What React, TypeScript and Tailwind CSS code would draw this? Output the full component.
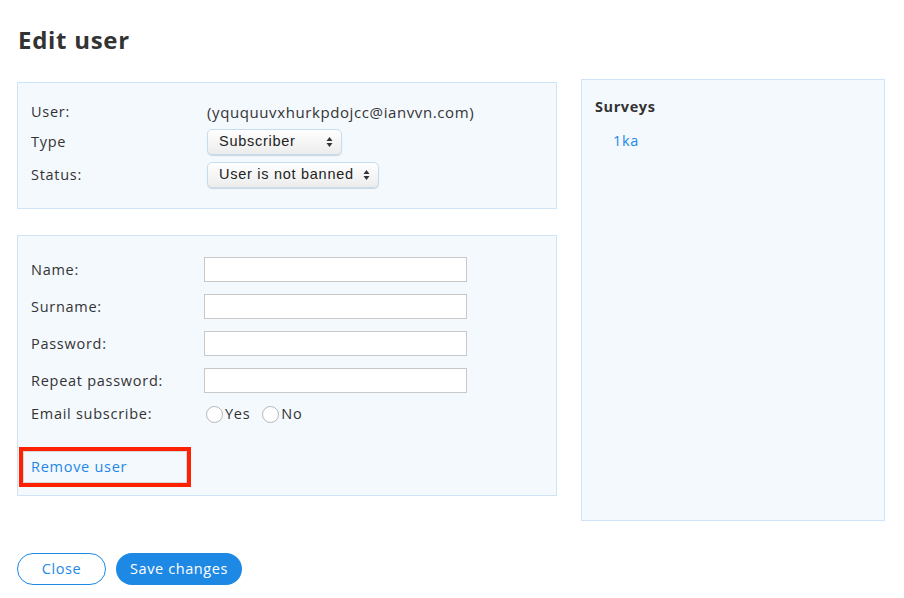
import React from 'react';

const font = { fontFamily: '"Open Sans", "Liberation Sans", sans-serif' };

function FakeSelect({ label, width }: { label: string; width: string }) {
  return (
    <div
      className={`flex items-center justify-between h-[26px] ${width} pl-[11px] pr-[8px] rounded-[5px] border border-[#c4ddf3] bg-gradient-to-b from-white to-[#ececec] shadow-[0_1px_1px_rgba(0,0,0,0.15)] text-[14.5px] text-[#222]`}
      style={{ fontFamily: '"Liberation Sans", Arial, sans-serif' }}
    >
      <span>{label}</span>
      <svg width="7" height="12" viewBox="0 0 7 12" className="text-[#333]">
        <path d="M3.5 1 L6.5 5 L0.5 5 Z" fill="currentColor" />
        <path d="M3.5 11 L6.5 7 L0.5 7 Z" fill="currentColor" />
      </svg>
    </div>
  );
}

function Field({ label }: { label: string }) {
  return (
    <div className="flex items-center h-[25px]">
      <span className="w-[173px] text-[14.5px] tracking-[0.05em] text-[#333]">{label}</span>
      <input className="w-[263px] h-[25px] bg-white border border-[#c8c8c8] outline-none" />
    </div>
  );
}

function Radio({ label }: { label: string }) {
  return (
    <label className="flex items-center">
      <span className="w-[17px] h-[17px] rounded-full border border-[#b5b5b5] bg-white" />
      <span className="text-[14.5px] tracking-[0.05em] text-[#333] ml-[2px]">{label}</span>
    </label>
  );
}

export default function App() {
  return (
    <div className="w-[904px] h-[598px] bg-white pl-[17px] pt-[26px]" style={font}>
      <h1 className="text-[24px] font-bold tracking-[0.03em] text-[#333] leading-[28px] pl-[1px]">Edit user</h1>

      <div className="flex gap-[24px] mt-[25px]">
        <div className="w-[540px] flex flex-col gap-[26px] pt-[3px]">
          <div className="border border-[#cfe4f6] bg-[#f4f9fe] px-[13px] pt-[19px] pb-[20px] flex flex-col gap-[7px] text-[14.5px] tracking-[0.05em] text-[#333]">
            <div className="flex items-center h-[20px]">
              <span className="w-[176px]">User:</span>
              <span className="text-[15px] tracking-[0.04em]">(yququuvxhurkpdojcc@ianvvn.com)</span>
            </div>
            <div className="flex items-center">
              <span className="w-[176px]">Type</span>
              <FakeSelect label="Subscriber" width="w-[135px]" />
            </div>
            <div className="flex items-center">
              <span className="w-[176px]">Status:</span>
              <FakeSelect label="User is not banned" width="w-[172px]" />
            </div>
          </div>

          <div className="border border-[#cfe4f6] bg-[#f4f9fe] pl-[13px] pt-[21px] pb-[8px]">
            <div className="flex flex-col gap-[12px]">
              <Field label="Name:" />
              <Field label="Surname:" />
              <Field label="Password:" />
              <Field label="Repeat password:" />
              <div className="flex items-center h-[20px] mt-[-1px]">
                <span className="w-[175px] text-[14.5px] tracking-[0.05em] text-[#333]">Email subscribe:</span>
                <div className="flex items-center gap-[12px]">
                  <Radio label="Yes" />
                  <Radio label="No" />
                </div>
              </div>
            </div>
            <div className="mt-[23px] ml-[-12px] w-[172px] h-[40px] border-[4px] border-[#ff2200]">
              <div className="h-full border border-[#d8d8d8] flex items-center pl-[7px]">
                <a href="#" className="text-[14.5px] tracking-[0.05em] text-[#1e88e5]">Remove user</a>
              </div>
            </div>
          </div>
        </div>

        <div className="w-[304px] h-[442px] border border-[#cfe4f6] bg-[#f4f9fe] px-[13px] pt-[16px]">
          <h2 className="text-[14.5px] tracking-[0.04em] font-bold text-[#333]">Surveys</h2>
          <a href="#" className="block mt-[12px] ml-[18px] text-[14.5px] tracking-[0.05em] text-[#1e88e5]">1ka</a>
        </div>
      </div>

      <div className="flex gap-[10px] mt-[32px]">
        <button className="w-[89px] h-[32px] rounded-full border border-[#1e88e5] bg-white text-[14.5px] tracking-[0.04em] text-[#1e88e5]">
          Close
        </button>
        <button className="w-[126px] h-[32px] rounded-full bg-[#1e88e5] text-[14.5px] tracking-[0.04em] text-white">
          Save changes
        </button>
      </div>
    </div>
  );
}
